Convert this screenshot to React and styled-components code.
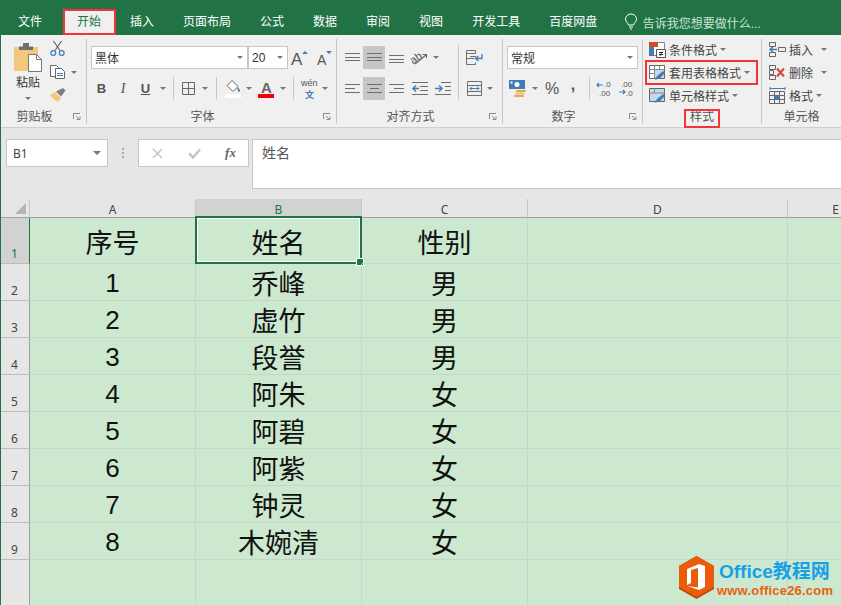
import styled, { createGlobalStyle, css } from 'styled-components';

const GREEN = '#217346';
const RED = '#f5333a';
const BLUE = '#3f7cb8';
const GREY = '#6f6f6f';
const FONT = '"Liberation Sans", "Noto Sans CJK SC", sans-serif';

const GlobalStyle = createGlobalStyle`
  html, body { margin: 0; height: 100%; overflow: hidden; }
  body { font-family: ${FONT}; font-size: 12px; color: #444; background: #e6e6e6; }
  * { box-sizing: border-box; }
  svg { overflow: visible; }
`;

const Page = styled.div`
  display: flex;
  flex-direction: column;
  width: 100vw;
  height: 100vh;
  overflow: hidden;
  border-left: 1px solid ${GREEN};
  position: relative;
`;

const TabBar = styled.div`
  display: flex;
  align-items: flex-end;
  flex: 0 0 35px;
  margin-left: -1px;
  padding-left: 3.5px;
  background: ${GREEN};
`;

const Tab = styled.div`
  height: 26px;
  line-height: 26px;
  padding: 0 14.5px;
  color: #fff;
  white-space: nowrap;
  ${(p) => p.$file && 'margin-right: 6px;'}
  ${(p) =>
    p.$active &&
    css`
      padding: 0 12.5px;
      background: #f0f0f0;
      color: ${GREEN};
      line-height: 22px;
      border: 2px solid ${RED};
    `}
`;

const TellMe = styled.div`
  display: flex;
  align-items: center;
  gap: 6px;
  height: 26px;
  margin-left: 13px;
  color: #c8e4d4;
  white-space: nowrap;
`;

const Ribbon = styled.div`
  display: flex;
  flex: 0 0 93px;
  padding-top: 4px;
  background: #f0f0f0;
  border-bottom: 1px solid #cfcfcf;
`;

const Group = styled.section`
  display: flex;
  flex-direction: column;
  flex: ${(p) => (p.$w ? `0 0 ${p.$w}px` : '1')};
  height: 85px;
  border-right: ${(p) => (p.$w ? '1px solid #c8c8c8' : 'none')};
`;

const GroupBody = styled.div`
  display: flex;
  flex: 1;
  min-height: 0;
  padding-left: ${(p) => p.$pad || 0}px;
`;

const GroupFooter = styled.div`
  display: flex;
  flex: 0 0 12px;
`;

const GroupLabel = styled.div`
  position: relative;
  flex: 1;
  height: 14px;
  line-height: 14px;
  text-align: center;
  color: #555;
`;

const MarkedLabel = styled.span`
  position: relative;
  &::after {
    content: '';
    position: absolute;
    left: -6px;
    right: -6px;
    top: -1px;
    bottom: -4px;
    border: 2px solid ${RED};
  }
`;

const Launcher = styled.span`
  display: flex;
  flex: 0 0 18px;
  height: 14px;
  align-items: center;
  justify-content: center;
`;

const Caret = styled.i`
  display: inline-block;
  width: 0;
  height: 0;
  border-left: 3px solid transparent;
  border-right: 3px solid transparent;
  border-top: 3px solid #777;
`;

const Tool = styled.span`
  display: inline-flex;
  flex: 0 0 ${(p) => p.$w}px;
  width: ${(p) => p.$w}px;
  height: 23px;
  align-items: center;
  justify-content: center;
  padding-bottom: ${(p) => p.$lift || 0}px;
  background: ${(p) => (p.$on ? '#c6c6c6' : 'transparent')};
  font-family: ${(p) => (p.$serif ? '"Liberation Serif", serif' : FONT)};
  font-size: ${(p) => p.$size || 12}px;
  font-weight: ${(p) => (p.$bold ? 700 : 400)};
  font-style: ${(p) => (p.$italic ? 'italic' : 'normal')};
  text-decoration: ${(p) => (p.$under ? 'underline' : 'none')};
  color: #555;
`;

const ToolRow = styled.div`
  display: flex;
  align-items: center;
  height: 23px;
`;

const ToolStack = styled.div`
  display: flex;
  flex-direction: column;
  gap: 8px;
  padding-top: 7px;
`;

const Divider = styled.span`
  flex: 0 0 1px;
  height: ${(p) => p.$h || 23}px;
  margin: 0 ${(p) => p.$r}px 0 ${(p) => p.$l}px;
  background: #c8c8c8;
`;

const TallDivider = styled(Divider)`
  margin-top: 6px;
`;

const PasteButton = styled.div`
  display: flex;
  flex: 0 0 40px;
  flex-direction: column;
  align-items: center;
  padding-top: 4px;
  color: #333;
  line-height: 15px;
  svg { margin-bottom: 4px; }
  i { margin-top: 6px; }
`;

const ClipTools = styled.div`
  display: flex;
  flex-direction: column;
  gap: 9px;
  padding-top: 2px;
`;

const ClipRow = styled.div`
  display: flex;
  align-items: center;
  gap: 6px;
  padding-left: 2px;
`;

const SelectBox = styled.div`
  display: flex;
  flex: 0 0 ${(p) => p.$w}px;
  width: ${(p) => p.$w}px;
  height: 23px;
  align-items: center;
  justify-content: space-between;
  padding: 0 4px 0 3px;
  background: #fff;
  border: 1px solid #c6c6c6;
  color: #333;
`;

const StyleList = styled.div`
  display: flex;
  flex-direction: column;
  margin-top: -1px;
`;

const StyleRow = styled.div`
  display: flex;
  align-items: center;
  gap: 3px;
  height: 23px;
  width: ${(p) => p.$w || 111}px;
  padding-left: 3px;
  color: #444;
  white-space: nowrap;
  i { margin-left: ${(p) => p.$caret || 0}px; }
  ${(p) => p.$marked && `outline: 2px solid ${RED}; outline-offset: -1px;`}
`;

const FormulaZone = styled.div`
  display: flex;
  flex: 0 0 71px;
  align-items: flex-start;
  gap: 0;
  padding: 11px 0 0 5px;
  background: #e6e6e6;
`;

const NameBox = styled.div`
  display: flex;
  flex: 0 0 102px;
  height: 28px;
  align-items: center;
  justify-content: space-between;
  padding: 0 6px;
  background: #fff;
  border: 1px solid #c6c6c6;
  font-family: "Noto Sans", sans-serif;
  color: #444;
  i { border-left-width: 4px; border-right-width: 4px; border-top-width: 4px; }
`;

const Grip = styled.div`
  display: flex;
  flex: 0 0 30px;
  height: 28px;
  align-items: center;
  justify-content: center;
`;

const FxBox = styled.div`
  display: grid;
  grid-template-columns: 37px 37px 35px;
  flex: 0 0 110px;
  height: 28px;
  align-items: center;
  justify-items: center;
  background: #fff;
  border: 1px solid #c6c6c6;
  margin-right: 3px;
`;

const FxLabel = styled.span`
  font-family: "Liberation Serif", serif;
  font-style: italic;
  font-weight: 700;
  font-size: 13px;
  color: #666;
`;

const FormulaInput = styled.div`
  flex: 1;
  height: 50px;
  padding: 2px 0 0 9px;
  background: #fff;
  border: 1px solid #c6c6c6;
  border-right: 0;
  font-size: 14px;
  color: #555;
`;

const Sheet = styled.div`
  display: grid;
  flex: 1;
  min-height: 0;
  margin-left: -1px;
  grid-template-columns: 30px 166px 166px 166px 260px 96px;
  grid-template-rows: 19px 46px repeat(8, 37px) 1fr;
  background: #cce8cf;
`;

const Corner = styled.div`
  display: flex;
  align-items: flex-end;
  justify-content: flex-end;
  padding: 0 3px 3px 0;
  background: #e6e6e6;
  border-right: 1px solid #c6c6c6;
  border-bottom: 1px solid #9f9f9f;
  &::after {
    content: '';
    border-left: 11px solid transparent;
    border-bottom: 11px solid #b5b5b5;
  }
`;

const ColHead = styled.div`
  text-align: center;
  line-height: 21px;
  font-family: "Noto Sans", sans-serif;
  color: ${(p) => (p.$active ? GREEN : '#444')};
  background: ${(p) => (p.$active ? '#d2d2d2' : '#e6e6e6')};
  border-right: 1px solid #c6c6c6;
  border-bottom: 1px solid #9f9f9f;
`;

const RowHead = styled.div`
  display: flex;
  align-items: flex-end;
  justify-content: center;
  padding-bottom: 1px;
  font-family: "Noto Sans", sans-serif;
  color: ${(p) => (p.$active ? GREEN : '#444')};
  background: ${(p) => (p.$active ? '#d2d2d2' : '#e6e6e6')};
  border-right: 1px solid ${(p) => (p.$active ? GREEN : '#9f9f9f')};
  border-bottom: ${(p) => (p.$last ? 'none' : '1px solid #bdbdbd')};
`;

const Cell = styled.div`
  position: relative;
  display: flex;
  align-items: center;
  justify-content: center;
  padding-top: ${(p) => (p.$digit ? 3 : 1)}px;
  font-size: ${(p) => (p.$digit ? 26 : 27)}px;
  color: #111;
  border-right: 1px solid #c8d6c9;
  border-bottom: ${(p) => (p.$last ? 'none' : '1px solid #c8d6c9')};
  ${(p) =>
    p.$selected &&
    css`
      &::before {
        content: '';
        position: absolute;
        inset: -2px -1px -1px -1px;
        border: 2px solid ${GREEN};
        box-shadow: inset 0 0 0 1px #fff;
      }
      &::after {
        content: '';
        position: absolute;
        right: -3px;
        bottom: -3px;
        width: 6px;
        height: 6px;
        background: ${GREEN};
        border: 1px solid #fff;
      }
    `}
`;

const Watermark = styled.div`
  position: absolute;
  left: 677px;
  top: 556px;
  display: flex;
  gap: 4px;
`;

const BrandText = styled.div`
  display: flex;
  flex-direction: column;
  padding-top: 5px;
`;

const BrandName = styled.div`
  font-size: 19px;
  line-height: 22px;
  font-weight: 700;
  color: #16a1e7;
  white-space: nowrap;
`;

const BrandUrl = styled.div`
  font-size: 13px;
  line-height: 16px;
  margin-left: -2px;
  letter-spacing: 0.2px;
  font-weight: 700;
  color: #e9600f;
  white-space: nowrap;
`;

const Lines = ({ rows, w = 15, h = 11, color = GREY }) => (
  <svg width={w} height={h} viewBox={`0 0 ${w} ${h}`}>
    {rows.map(([a, b, y]) => (
      <path key={`${a}-${y}`} d={`M${a} ${y}.5H${b}`} stroke={color} strokeWidth="1" />
    ))}
  </svg>
);

const LauncherIcon = () => (
  <svg width="8" height="8" viewBox="0 0 8 8" fill="none" stroke="#8a8a8a">
    <path d="M.5 6V.5H7" />
    <path d="M3 3l3.5 3.5M3.5 6.5h3.5V3.5" />
  </svg>
);

const PasteIcon = () => (
  <svg width="28" height="29" viewBox="0 0 28 29">
    <rect y="4" width="24" height="24" rx="1" fill="#f0c97f" />
    <path d="M5 7V3.5h4V0h6v3.5h4V7z" fill="#6f6f6f" />
    <path d="M14.5 11.5h8l5 5v12h-13z" fill="#fff" stroke="#777" />
    <path d="M22.5 11.5v5h5" fill="none" stroke="#777" />
  </svg>
);

const ScissorsIcon = () => (
  <svg width="15" height="15" viewBox="0 0 15 15" fill="none">
    <path d="M5 9.5L11.5 0M10 9.5L3.5 0" stroke="#666" strokeWidth="1.2" />
    <circle cx="3.3" cy="12" r="2.4" stroke={BLUE} strokeWidth="1.2" />
    <circle cx="11.7" cy="12" r="2.4" stroke={BLUE} strokeWidth="1.2" />
  </svg>
);

const CopyIcon = () => (
  <svg width="15" height="14" viewBox="0 0 15 14" fill="#fff" stroke="#666">
    <path d="M.5.5h6l2 2v9h-8z" />
    <path d="M5.5 3.5h6l3 3v7h-9z" />
    <path d="M7 8.5h6M7 10.5h6" stroke={BLUE} />
  </svg>
);

const BrushIcon = () => (
  <svg width="16" height="14" viewBox="0 0 16 14">
    <path d="M0 7l5-3 6 6-3 4C5 12 2 10 0 7z" fill="#f0c97f" />
    <path d="M6 3.5l5 5 4.5-6L13 0z" fill="#7d7d7d" />
  </svg>
);

const GrowIcon = ({ down }) => (
  <svg width="18" height="18" viewBox="0 0 18 18">
    <text x={down ? 2 : 0} y="16" fontSize={down ? 14 : 17} fill="#555" fontFamily="Liberation Sans">
      A
    </text>
    <path d={down ? 'M11 2h6l-3 3z' : 'M11 5h6l-3-3z'} fill={BLUE} />
  </svg>
);

const BorderIcon = () => (
  <svg width="13" height="13" viewBox="0 0 13 13" fill="none" stroke="#666">
    <path d="M.5.5h12v12H.5zM6.5.5v12M.5 6.5h12" />
  </svg>
);

const FillIcon = () => (
  <svg width="16" height="19" viewBox="0 0 16 19">
    <path d="M7 1.5l6 6-5 5-6-6z" fill="#fff" stroke="#666" />
    <path d="M12 8c2 1 3 3 3 4s-2 1-2 0z" fill={BLUE} />
    <rect y="15" width="16" height="4" fill="#fff" />
  </svg>
);

const FontColorIcon = () => (
  <svg width="16" height="20" viewBox="0 0 16 20">
    <text x="3" y="14" fontSize="15" fontWeight="700" fill="#666" fontFamily="Liberation Sans">
      A
    </text>
    <rect y="15" width="16" height="4" fill="#f0000c" />
  </svg>
);

const PhoneticIcon = () => (
  <svg width="17" height="20" viewBox="0 0 17 20">
    <text x="0" y="7" fontSize="9" fill="#555" fontFamily="Liberation Sans">
      wén
    </text>
    <text x="4" y="19" fontSize="9" fontWeight="700" fill={BLUE} fontFamily="Noto Sans CJK SC">
      文
    </text>
  </svg>
);

const OrientIcon = () => (
  <svg width="18" height="16" viewBox="0 0 18 16">
    <text x="1" y="12" fontSize="11" fill="#555" fontFamily="Liberation Sans" transform="rotate(-35 6 10)">
      ab
    </text>
    <path d="M5 14L16 5M12.5 4.5H16.500V8" fill="none" stroke="#666" strokeWidth="1.100" />
  </svg>
);

const IndentIcon = ({ right }) => (
  <svg width="16" height="13" viewBox="0 0 16 13">
    <path d={right ? 'M6 .5h10M10 4.500h6M10 8.500h6M0 12.500h16' : 'M0 .5h16M8 4.500h8M8 8.500h8M0 12.500h16'} stroke={GREY} />
    <path d={right ? 'M0 6.500h6M4 3.500l3 3-3 3' : 'M1 6.500h6M4 3.500l-3 3 3 3'} stroke={BLUE} strokeWidth="1.500" fill="none" />
  </svg>
);

const WrapIcon = () => (
  <svg width="17" height="15" viewBox="0 0 17 15" fill="none">
    <path d="M.5 14.500V.5h9v3H.5M.5 8.500h8M.5 14.500h9v-2" stroke={GREY} />
    <path d="M4 6.500h6" stroke={GREY} />
    <path d="M16 4v4.500H10M12.500 6l-3 2.500 3 2.500" stroke={BLUE} strokeWidth="1.300" />
  </svg>
);

const MergeIcon = () => (
  <svg width="15" height="15" viewBox="0 0 15 15" fill="none">
    <path d="M.5.5h14v14H.5zM.5 4.500h14M.5 10.500h14" stroke={GREY} />
    <path d="M3 7.500h9M5 5.500l-2 2 2 2M10 5.500l2 2-2 2" stroke={BLUE} />
  </svg>
);

const CurrencyIcon = () => (
  <svg width="18" height="17" viewBox="0 0 18 17">
    <rect width="16" height="9" fill={BLUE} />
    <circle cx="8" cy="4.500" r="2.500" fill="#fff" />
    <rect x="1.500" y="1.500" width="2" height="2" fill="#fff" />
    <rect x="7" y="10" width="10" height="2" rx="1" fill="#e2a84c" />
    <rect x="6" y="12.500" width="10" height="2" rx="1" fill="#eabf77" />
    <rect x="5" y="15" width="10" height="2" rx="1" fill="#e2a84c" />
  </svg>
);

const DecimalIcon = ({ less }) => (
  <svg width="16" height="16" viewBox="0 0 16 16">
    <text x={less ? 8 : 3} y="6" fontSize="8" fill="#555" fontFamily="Liberation Sans">
      {less ? '.0' : '.00'}
    </text>
    <text x={less ? 3 : 8} y="15" fontSize="8" fill="#555" fontFamily="Liberation Sans">
      {less ? '.00' : '.0'}
    </text>
    <path d={less ? 'M1 4h6M3 2L1 4l2 2' : 'M1 11h6M5 9l2 2-2 2'} stroke={BLUE} strokeWidth="1.200" fill="none" />
  </svg>
);

const TableIcon = ({ variant }) => (
  <svg width="17" height="16" viewBox="0 0 17 16" fill="none">
    <path d="M.5.5h15v13H.5z" fill={variant === 'cell' ? '#c6d7ea' : '#fff'} stroke="#666" />
    {variant !== 'cell' && <path d="M.5 4.500h15M.5 8.500h15M5.500.5v13M10.500.5v13" stroke="#888" />}
    {variant === 'table' && <path d="M6 5h9v8H6z" fill="#c6d7ea" />}
    {variant === 'cell' && <path d="M.5 5h15M5.500.5V5" stroke="#888" />}
    <path d="M6 15l2-4 6-5 2 2-5 5z" fill={BLUE} />
  </svg>
);

const CondIcon = () => (
  <svg width="17" height="16" viewBox="0 0 17 16" fill="none">
    <path d="M.5.5h15v13H.5z" fill="#fff" stroke="#888" />
    <path d="M0 0h9v5H0z" fill="#d1492f" />
    <path d="M0 5h5v9H0z" fill={BLUE} />
    <path d="M7.500 7.500h9v8h-9z" fill="#fff" stroke="#555" />
    <path d="M10 10.500h4M10 12.500h4M13 9.500l-2 4.500" stroke="#333" />
  </svg>
);

const InsertIcon = () => (
  <svg width="17" height="15" viewBox="0 0 17 15" fill="none" stroke="#666">
    <path d="M.5.5h6v4h-6zM.5 10.500h6v4h-6zM9.500 5.500h7v4h-7z" />
    <path d="M1 7.500h7M4 5l-3 2.500L4 10" stroke={BLUE} strokeWidth="1.500" />
  </svg>
);

const DeleteIcon = () => (
  <svg width="17" height="15" viewBox="0 0 17 15" fill="none" stroke="#666">
    <path d="M.5.5h6v4h-6zM.5 10.500h6v4h-6zM.5 5.500h4v4h-4z" />
    <path d="M8 3.500l7 8M15 3.500l-7 8" stroke="#d1492f" strokeWidth="2" />
  </svg>
);

const FormatIcon = () => (
  <svg width="17" height="17" viewBox="0 0 17 17" fill="none" stroke="#666">
    <path d="M1 1.500h15M1 0v3M16 0v3" stroke={BLUE} />
    <path d="M.5 4.500h15v12H.5zM.5 8.500h15M.5 12.500h15M5.500 4.500v12M10.500 4.500v12" />
    <path d="M5.500 8.500h5v4h-5z" fill={BLUE} stroke="none" />
  </svg>
);

const BulbIcon = () => (
  <svg width="12" height="16" viewBox="0 0 12 16" fill="none" stroke="#fff">
    <path d="M3.500 11C3 8.500.5 8 .5 5a5.500 5 0 0 1 11 0c0 3-2.500 3.500-3 6z" />
    <path d="M4 13h4M5 15h2" />
  </svg>
);

const GripIcon = () => (
  <svg width="3" height="11" viewBox="0 0 3 11" fill="#aaa">
    <rect width="2" height="2" />
    <rect y="4" width="2" height="2" />
    <rect y="8" width="2" height="2" />
  </svg>
);

const CrossIcon = () => (
  <svg width="11" height="11" viewBox="0 0 11 11" stroke="#c4c4c4" strokeWidth="1.500">
    <path d="M1 1l9 9M10 1l-9 9" />
  </svg>
);

const CheckIcon = () => (
  <svg width="13" height="11" viewBox="0 0 13 11" fill="none" stroke="#c4c4c4" strokeWidth="2.500">
    <path d="M1 5.500l4 4 7-8" />
  </svg>
);

const HexLogo = () => (
  <svg width="37" height="43" viewBox="0 0 37 43">
    <path d="M18.500 0L36 10v23L18.500 43 1 33V10z" fill="#b84a0a" />
    <path d="M18.500 0L36 10v21L18.500 41 1 31V10z" fill="#ea5b0c" />
    <path d="M9 13l12-5 6 2v21l-6 3-12-4 11 1.500V12l-7 2v13l-4 2z" fill="#fff" />
  </svg>
);

const tabs = ['插入', '页面布局', '公式', '数据', '审阅', '视图', '开发工具', '百度网盘'];
const columns = ['A', 'B', 'C', 'D', 'E'];
const people = [
  ['序号', '姓名', '性别'],
  ['1', '乔峰', '男'],
  ['2', '虚竹', '男'],
  ['3', '段誉', '男'],
  ['4', '阿朱', '女'],
  ['5', '阿碧', '女'],
  ['6', '阿紫', '女'],
  ['7', '钟灵', '女'],
  ['8', '木婉清', '女'],
];
const filler = ['', '', '', '', ''];

function ClipboardGroup() {
  return (
    <Group $w={86}>
      <GroupBody $pad={7}>
        <PasteButton>
          <PasteIcon />
          粘贴
          <Caret />
        </PasteButton>
        <ClipTools>
          <ClipRow><ScissorsIcon /></ClipRow>
          <ClipRow><CopyIcon /><Caret /></ClipRow>
          <ClipRow><BrushIcon /></ClipRow>
        </ClipTools>
      </GroupBody>
      <GroupFooter>
        <GroupLabel>剪贴板</GroupLabel>
        <Launcher><LauncherIcon /></Launcher>
      </GroupFooter>
    </Group>
  );
}

function FontGroup() {
  return (
    <Group $w={250}>
      <GroupBody $pad={4}>
        <ToolStack>
          <ToolRow>
            <SelectBox $w={157}>黑体<Caret /></SelectBox>
            <SelectBox $w={40}>20<Caret /></SelectBox>
            <Tool $w={24}><GrowIcon /></Tool>
            <Tool $w={24}><GrowIcon down /></Tool>
          </ToolRow>
          <ToolRow>
            <Tool $w={21} $size={13} $bold>B</Tool>
            <Tool $w={22} $size={14} $italic $serif>I</Tool>
            <Tool $w={23} $size={13} $bold $under>U</Tool>
            <Tool $w={11}><Caret /></Tool>
            <Divider $l={5} $r={4} />
            <Tool $w={20}><BorderIcon /></Tool>
            <Tool $w={14}><Caret /></Tool>
            <Divider $l={4} $r={4} />
            <Tool $w={24}><FillIcon /></Tool>
            <Tool $w={8}><Caret /></Tool>
            <Tool $w={26}><FontColorIcon /></Tool>
            <Tool $w={7}><Caret /></Tool>
            <Divider $l={7} $r={5} />
            <Tool $w={20}><PhoneticIcon /></Tool>
            <Tool $w={12}><Caret /></Tool>
          </ToolRow>
        </ToolStack>
      </GroupBody>
      <GroupFooter>
        <GroupLabel>字体</GroupLabel>
        <Launcher><LauncherIcon /></Launcher>
      </GroupFooter>
    </Group>
  );
}

function AlignGroup() {
  return (
    <Group $w={166}>
      <GroupBody $pad={4}>
        <ToolStack>
          <ToolRow>
            <Tool $w={22}><Lines rows={[[0, 15, 1], [0, 15, 5], [0, 15, 8]]} /></Tool>
            <Tool $w={22} $on><Lines rows={[[0, 15, 1], [0, 15, 5], [0, 15, 8]]} /></Tool>
            <Tool $w={22}><Lines rows={[[0, 15, 3], [0, 15, 7], [0, 15, 10]]} /></Tool>
            <Tool $w={24}><OrientIcon /></Tool>
            <Tool $w={10}><Caret /></Tool>
          </ToolRow>
          <ToolRow>
            <Tool $w={22}><Lines rows={[[0, 15, 1], [0, 10, 5], [0, 15, 9]]} /></Tool>
            <Tool $w={22} $on><Lines rows={[[0, 15, 1], [3, 12, 5], [0, 15, 9]]} /></Tool>
            <Tool $w={22}><Lines rows={[[0, 15, 1], [5, 15, 5], [0, 15, 9]]} /></Tool>
            <Tool $w={25}><IndentIcon /></Tool>
            <Tool $w={22}><IndentIcon right /></Tool>
          </ToolRow>
        </ToolStack>
        <TallDivider $l={4} $r={4} $h={55} />
        <ToolStack>
          <ToolRow>
            <Tool $w={22}><WrapIcon /></Tool>
          </ToolRow>
          <ToolRow>
            <Tool $w={22}><MergeIcon /></Tool>
            <Tool $w={10}><Caret /></Tool>
          </ToolRow>
        </ToolStack>
      </GroupBody>
      <GroupFooter>
        <GroupLabel>对齐方式</GroupLabel>
        <Launcher><LauncherIcon /></Launcher>
      </GroupFooter>
    </Group>
  );
}

function NumberGroup() {
  return (
    <Group $w={140}>
      <GroupBody $pad={4}>
        <ToolStack>
          <ToolRow>
            <SelectBox $w={131}>常规<Caret /></SelectBox>
          </ToolRow>
          <ToolRow>
            <Tool $w={22}><CurrencyIcon /></Tool>
            <Tool $w={11}><Caret /></Tool>
            <Tool $w={24} $size={16}>%</Tool>
            <Tool $w={18} $size={16} $bold $lift={7}>,</Tool>
            <Divider $l={7} $r={5} />
            <Tool $w={18}><DecimalIcon less /></Tool>
            <Tool $w={26}><DecimalIcon /></Tool>
          </ToolRow>
        </ToolStack>
      </GroupBody>
      <GroupFooter>
        <GroupLabel>数字</GroupLabel>
        <Launcher><LauncherIcon /></Launcher>
      </GroupFooter>
    </Group>
  );
}

function StylesGroup() {
  return (
    <Group $w={119}>
      <GroupBody $pad={3}>
        <StyleList>
          <StyleRow><CondIcon />条件格式<Caret /></StyleRow>
          <StyleRow $marked><TableIcon variant="table" />套用表格格式<Caret /></StyleRow>
          <StyleRow><TableIcon variant="cell" />单元格样式<Caret /></StyleRow>
        </StyleList>
      </GroupBody>
      <GroupFooter>
        <GroupLabel><MarkedLabel>样式</MarkedLabel></GroupLabel>
      </GroupFooter>
    </Group>
  );
}

function CellsGroup() {
  return (
    <Group>
      <GroupBody $pad={4}>
        <StyleList>
          <StyleRow $w={72} $caret={5}><InsertIcon />插入<Caret /></StyleRow>
          <StyleRow $w={72} $caret={5}><DeleteIcon />删除<Caret /></StyleRow>
          <StyleRow $w={72}><FormatIcon />格式<Caret /></StyleRow>
        </StyleList>
      </GroupBody>
      <GroupFooter>
        <GroupLabel>单元格</GroupLabel>
      </GroupFooter>
    </Group>
  );
}

function Row({ index, values }) {
  return (
    <>
      <RowHead $active={index === 0}>{index + 1}</RowHead>
      {values.map((v, i) => (
        <Cell key={i} $digit={i === 0 && index > 0} $selected={index === 0 && i === 1}>{v}</Cell>
      ))}
    </>
  );
}

function App() {
  return (
    <Page>
      <GlobalStyle />
      <TabBar>
        <Tab $file>文件</Tab>
        <Tab $active>开始</Tab>
        {tabs.map((t) => (
          <Tab key={t}>{t}</Tab>
        ))}
        <TellMe>
          <BulbIcon />
          告诉我您想要做什么...
        </TellMe>
      </TabBar>
      <Ribbon>
        <ClipboardGroup />
        <FontGroup />
        <AlignGroup />
        <NumberGroup />
        <StylesGroup />
        <CellsGroup />
      </Ribbon>
      <FormulaZone>
        <NameBox>B1<Caret /></NameBox>
        <Grip><GripIcon /></Grip>
        <FxBox>
          <CrossIcon />
          <CheckIcon />
          <FxLabel>fx</FxLabel>
        </FxBox>
        <FormulaInput>姓名</FormulaInput>
      </FormulaZone>
      <Sheet>
        <Corner />
        {columns.map((c) => (
          <ColHead key={c} $active={c === 'B'}>{c}</ColHead>
        ))}
        {people.map((row, r) => (
          <Row key={row[0]} index={r} values={[...row, '', '']} />
        ))}
        <RowHead $last />
        {filler.map((_, i) => (
          <Cell key={i} $last />
        ))}
      </Sheet>
      <Watermark>
        <HexLogo />
        <BrandText>
          <BrandName>Office教程网</BrandName>
          <BrandUrl>www.office26.com</BrandUrl>
        </BrandText>
      </Watermark>
    </Page>
  );
}

export default App;
